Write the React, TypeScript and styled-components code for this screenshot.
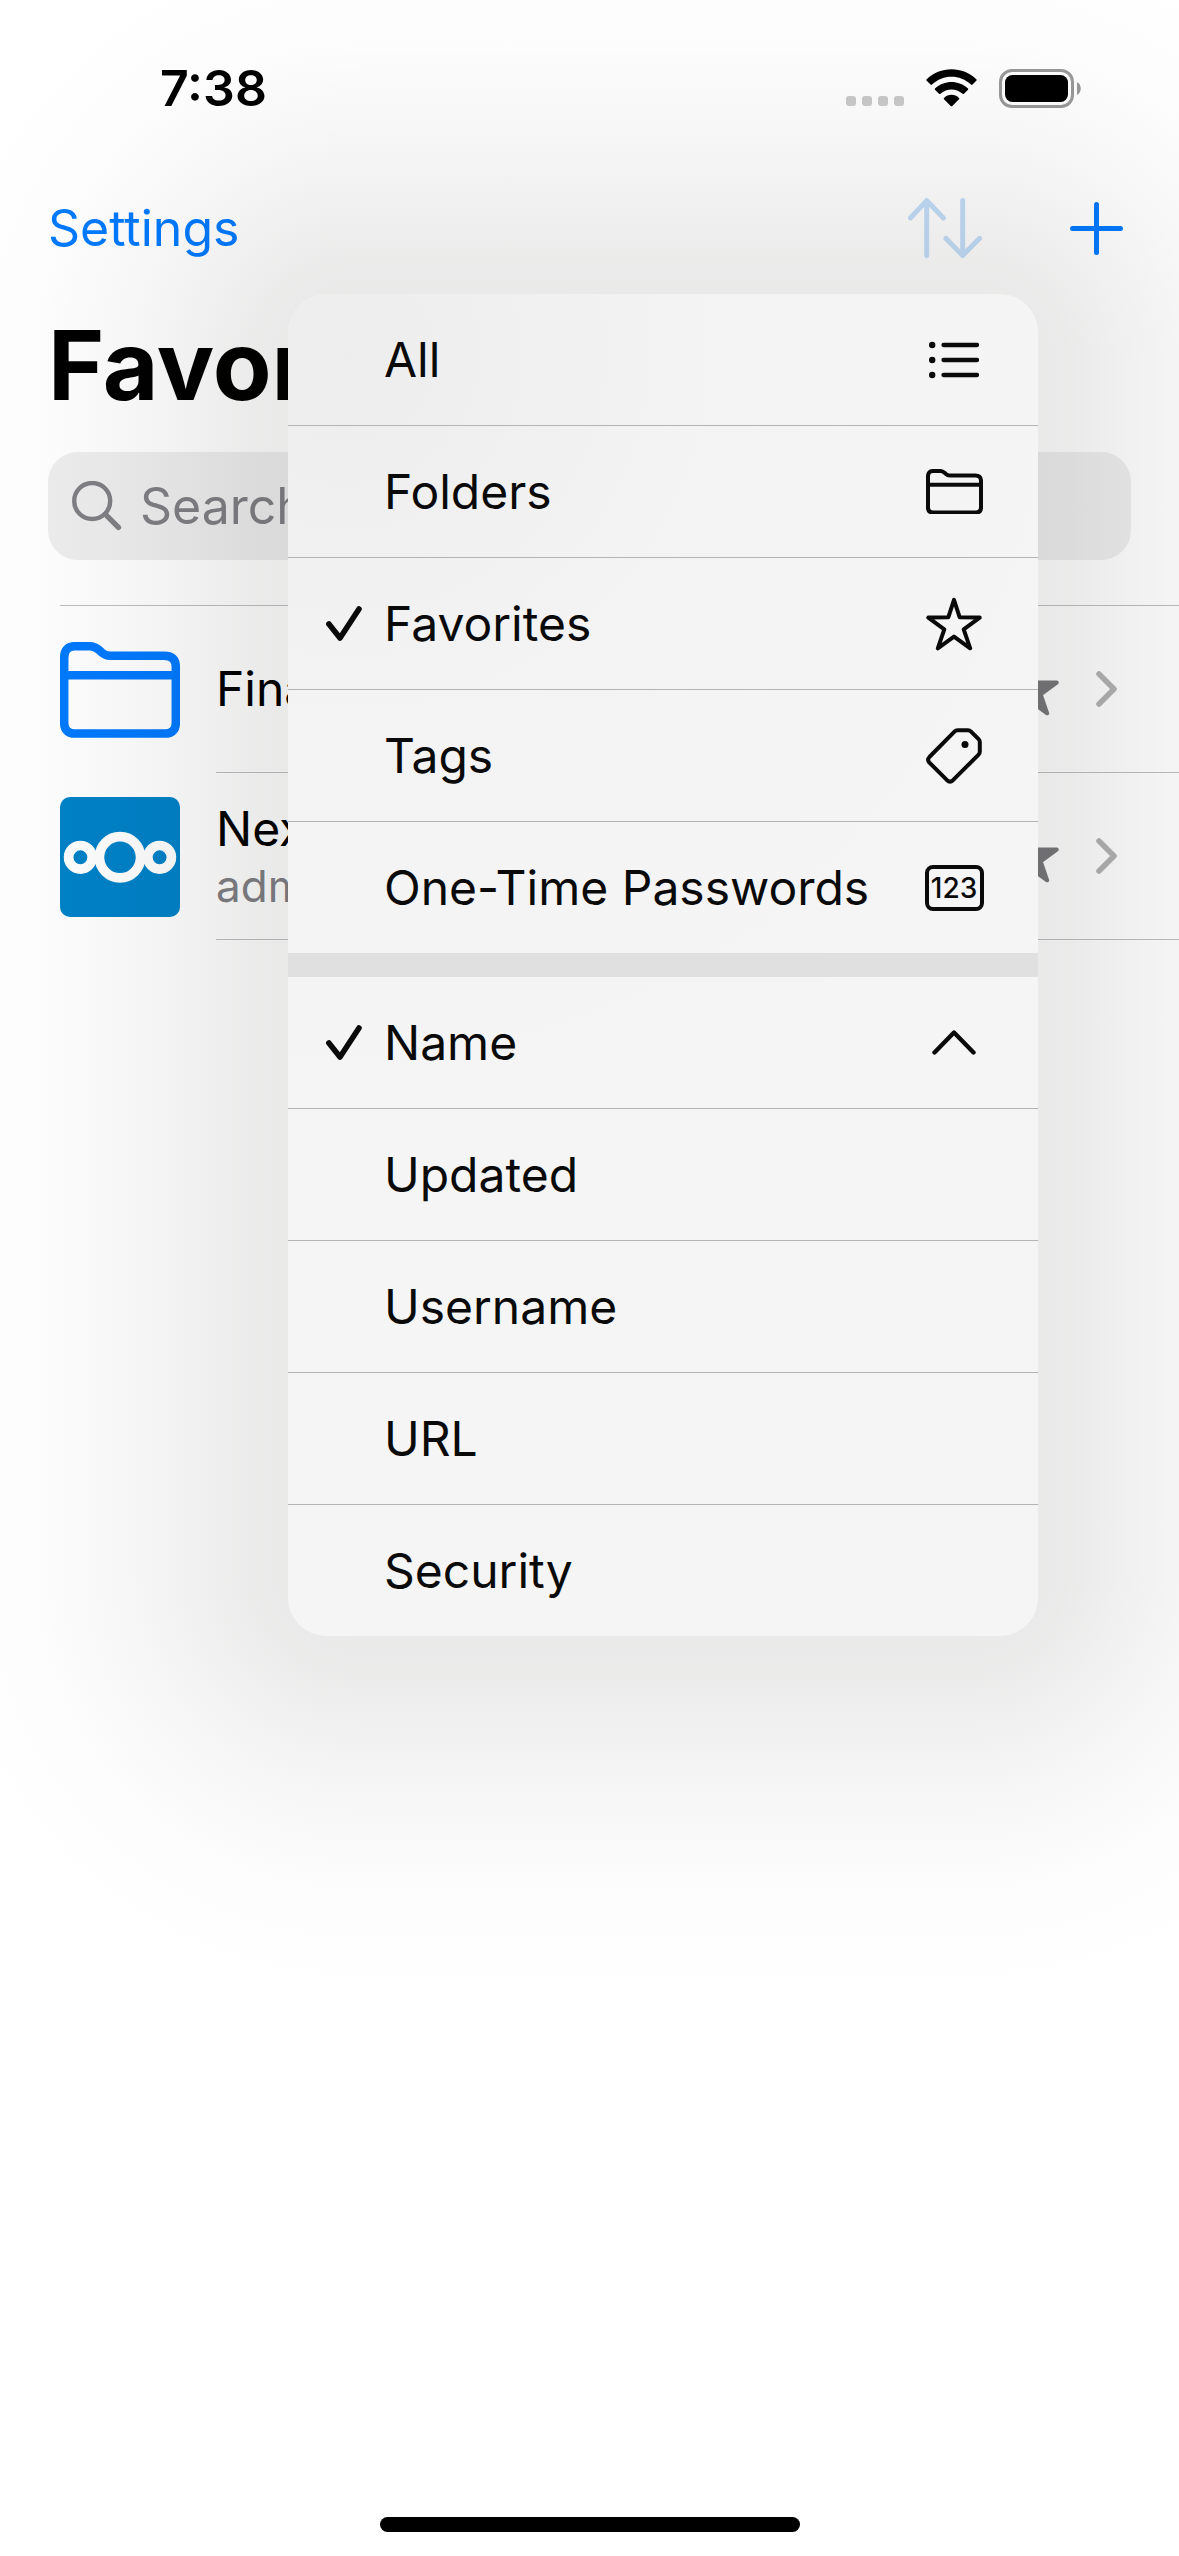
import React from "react";
import styled, { createGlobalStyle } from "styled-components";

const GlobalStyle = createGlobalStyle`
  *, *::before, *::after { box-sizing: border-box; }
  body {
    margin: 0;
    background: #fff;
    color: #000;
    font-family: Inter, "Noto Sans", sans-serif;
    font-size: 48px;
    line-height: 60px;
  }
  button {
    margin: 0;
    padding: 0;
    border: 0;
    background: none;
    color: inherit;
    font: inherit;
    text-align: left;
    cursor: pointer;
  }
  svg { display: block; flex: none; }
`;

const Screen = styled.div`
  position: relative;
  display: flex;
  flex-direction: column;
  min-height: 100vh;
  overflow: hidden;
`;

const StatusBar = styled.header`
  display: flex;
  align-items: center;
  justify-content: space-between;
  height: 162px;
  padding: 14px 98px 0 160px;
`;

const Clock = styled.time`
  font-size: 50px;
  font-weight: 600;
`;

const StatusIcons = styled.div`
  display: flex;
  align-items: center;
  gap: 22px;
`;

const SignalDots = styled.div`
  display: flex;
  gap: 6px;
  margin-top: 26px;
`;

const SignalDot = styled.span`
  width: 10px;
  height: 10px;
  border-radius: 3px;
  background: #cacaca;
`;

const NavBar = styled.nav`
  display: flex;
  align-items: center;
  justify-content: space-between;
  height: 132px;
  padding: 0 56px 0 48px;
  font-size: 50px;
`;

const NavButton = styled.button<{ $dimmed?: boolean }>`
  color: ${(p) => (p.$dimmed ? "#c4def9" : "#007aff")};
`;

const NavActions = styled.div`
  display: flex;
  align-items: center;
  gap: 88px;
`;

const Title = styled.h1`
  margin: 0 48px;
  font-size: 96px;
  font-weight: 700;
  line-height: 142px;
`;

const SearchField = styled.label`
  display: flex;
  align-items: center;
  gap: 18px;
  height: 108px;
  margin: 16px 48px 45px;
  padding: 0 24px;
  border-radius: 30px;
  background: #eeeeef;
  color: #808085;
  font-size: 50px;
`;

const SearchInput = styled.input`
  flex: 1;
  min-width: 0;
  padding: 0;
  border: 0;
  outline: 0;
  background: none;
  color: #000;
  font: inherit;
  &::placeholder { color: #808085; opacity: 1; }
`;

const EntryList = styled.ul`
  margin: 0 0 0 60px;
  padding: 0;
  border-top: 1px solid #bfbfc1;
  list-style: none;
`;

const Entry = styled.a`
  display: flex;
  gap: 36px;
  height: 167px;
  color: #000;
  text-decoration: none;
`;

const EntryIcon = styled.span`
  display: flex;
  align-items: center;
  color: #007aff;
`;

const EntryBody = styled.span`
  display: flex;
  flex: 1;
  align-items: center;
  gap: 37px;
  padding-right: 62px;
  border-bottom: 1px solid #bfbfc1;
`;

const EntryText = styled.span`
  display: flex;
  flex: 1;
  flex-direction: column;
`;

const EntryDetail = styled.span`
  color: #808085;
  font-size: 44px;
  line-height: 54px;
`;

const EntryStar = styled.span`
  color: #79797d;
`;

const EntryChevron = styled.span`
  color: #b3b3b4;
`;

/* Opacity of the popover's ambient shadow by distance from its edge. */
const falloff: [number, number][] = [
  [0, 0.086],
  [30, 0.081],
  [80, 0.063],
  [125, 0.047],
  [170, 0.032],
  [205, 0.022],
  [250, 0.012],
  [285, 0.008],
  [320, 0.004],
  [380, 0],
];
const shade = (inset: number) =>
  falloff.map(([d, a]) => `rgba(6, 6, 0, ${a}) ${d + inset}px`).join(", ");
const corner = (at: string) => `radial-gradient(circle at ${at}, ${shade(70)})`;
const side = (to: string) => `linear-gradient(to ${to}, ${shade(70)})`;

const Popover = styled.div`
  position: absolute;
  top: 294px;
  right: 141px;
  width: 750px;
  &::before {
    content: "";
    position: absolute;
    inset: -380px;
    pointer-events: none;
    background-repeat: no-repeat;
    background-image:
      ${corner("100% 100%")}, ${corner("0 100%")}, ${corner("100% 0")}, ${corner("0 0")},
      ${side("top")}, ${side("bottom")}, ${side("left")}, ${side("right")};
    background-size:
      450px 450px, 450px 450px, 450px 450px, 450px 450px,
      calc(100% - 900px) 450px, calc(100% - 900px) 450px,
      450px calc(100% - 900px), 450px calc(100% - 900px);
    background-position:
      left top, right top, left bottom, right bottom,
      center top, center bottom, left center, right center;
  }
`;

const Menu = styled.div`
  position: relative;
  overflow: hidden;
  border-radius: 38px;
  background: radial-gradient(circle at 60px 60px, #ededed, #f3f3f3 340px, #f5f5f5 800px);
`;

const MenuGroup = styled.div`
  & + & { border-top: 24px solid #e0e0e0; }
`;

const MenuItem = styled.button`
  display: grid;
  grid-template-columns: 36px 1fr 60px;
  column-gap: 22px;
  align-items: center;
  width: 100%;
  height: 132px;
  padding: 0 54px 0 38px;
  border-bottom: 1px solid #b4b4b4;
  color: #0a0a0a;
  white-space: nowrap;
  &:last-child {
    height: 131px;
    border-bottom: 0;
  }
`;

const ItemIcon = styled.span`
  display: flex;
  justify-content: center;
`;

const NumberBadge = styled.span`
  display: flex;
  align-items: center;
  justify-content: center;
  width: 59px;
  height: 46px;
  border: 4px solid currentColor;
  border-radius: 8px;
  font-size: 28px;
  font-weight: 500;
  line-height: 30px;
`;

const HomeIndicator = styled.div`
  width: 420px;
  height: 15px;
  margin: auto auto 24px;
  border-radius: 8px;
  background: #000;
`;

const line = {
  fill: "none",
  stroke: "currentColor",
  strokeLinecap: "round",
  strokeLinejoin: "round",
} as const;

const WifiIcon = () => (
  <svg width="51" height="38" viewBox="0 0 51 38" aria-hidden="true">
    <path d="M.5 10.4C14-3.2 37-3.2 50.5 10.4Q51 11 50.5 11.6L46.5 15.6Q45.8 16.2 45 15.5C34 5 17 5 6 15.5Q5.2 16.2 4.5 15.6L.5 11.6Q0 11 .5 10.4Z" />
    <path d="M9 19.6C18 10.8 33 10.8 42 19.6Q42.5 20.2 42 20.8L38 24.8Q37.3 25.4 36.6 24.8C30 19 21 19 14.4 24.8Q13.7 25.4 13 24.8L9 20.8Q8.5 20.2 9 19.6Z" />
    <path d="M18 29C22 24.8 29 24.8 33 29Q33.6 29.6 33 30.2L26.3 36.9Q25.5 37.6 24.7 36.9L18 30.2Q17.4 29.6 18 29Z" />
  </svg>
);

const BatteryIcon = () => (
  <svg width="82" height="39" viewBox="0 0 82 39" aria-hidden="true">
    <rect x="1.5" y="1.5" width="72" height="36" rx="11.5" fill="none" stroke="#999" strokeWidth="3" />
    <rect x="6" y="6" width="63" height="27" rx="7.5" />
    <path d="M78 13C83 15.5 83 23.5 78 26Z" fill="#999" />
  </svg>
);

const SortIcon = () => (
  <svg width="74" height="60" viewBox="0 0 74 60" strokeWidth="5" {...line} aria-hidden="true">
    <path d="M18.7 57.4V2.6M2.4 20 18.7 2.6 35.4 20" />
    <path d="M54.7 2.6V57.4M38 40.4 54.7 57.4 71.4 40.4" />
  </svg>
);

const PlusIcon = () => (
  <svg width="53" height="53" viewBox="0 0 53 53" strokeWidth="5" {...line} aria-hidden="true">
    <path d="M26.5 2.5V50.5M2.5 26.5H50.5" />
  </svg>
);

const SearchIcon = () => (
  <svg width="50" height="50" viewBox="0 0 50 50" strokeWidth="4.4" {...line} aria-hidden="true">
    <circle cx="20.2" cy="20" r="18" />
    <path d="M33.4 33.4 46.4 46.4" strokeWidth="5.4" />
  </svg>
);

const FolderIcon = ({ width }: { width: number }) => (
  <svg width={width} height={width * 0.8} viewBox="0 0 120 96" strokeWidth="8.5" {...line} aria-hidden="true">
    <path d="M4.2 81V15.5C4.2 8 8 4.2 14.5 4.2H30C34 4.2 36 5.5 39 8L41.5 10.2C44 12.6 46 13.8 50 13.8H104C112 13.8 115.8 17.5 115.8 25V81C115.8 88 112 91.6 105 91.6H15C8 91.6 4.2 88 4.2 81Z" />
    <path d="M4.2 33.3H115.8" />
  </svg>
);

const NextcloudIcon = () => (
  <svg width="120" height="120" viewBox="0 0 120 120" aria-hidden="true">
    <rect width="120" height="120" rx="10" fill="#0082c9" />
    <g fill="none" stroke="#fff" strokeWidth="9.7">
      <circle cx="60" cy="60.3" r="20.6" />
      <circle cx="20.4" cy="60.3" r="11.8" />
      <circle cx="99.6" cy="60.3" r="11.8" />
    </g>
  </svg>
);

const StarIcon = ({ filled }: { filled?: boolean }) => (
  <svg width="56" height="54" viewBox="0 0 56 54" strokeWidth="4" {...line} fill={filled ? "currentColor" : "none"} aria-hidden="true">
    <path d="M28 2.8 33.6 20.2 53.7 20.6 37.7 32.3 44.2 51.3 28 39.6 11.8 51.3 18.3 32.3 2.3 20.6 22.4 20.2Z" />
  </svg>
);

const ChevronRight = () => (
  <svg width="21" height="36" viewBox="0 0 21 36" strokeWidth="5.5" {...line} aria-hidden="true">
    <path d="M3 3 18 18 3 33" />
  </svg>
);

const CheckIcon = () => (
  <svg width="36" height="35" viewBox="0 0 36 35" strokeWidth="5.6" {...line} aria-hidden="true">
    <path d="M2.9 18 14 32 33 3" />
  </svg>
);

const ListIcon = () => (
  <svg width="50" height="38" viewBox="0 0 50 38" strokeWidth="4.3" {...line} aria-hidden="true">
    <path d="M14.5 4H48M14.5 19H48M14.5 34H48" />
    <g fill="currentColor" stroke="none">
      <circle cx="3.2" cy="4" r="3.2" />
      <circle cx="3.2" cy="19" r="3.2" />
      <circle cx="3.2" cy="34" r="3.2" />
    </g>
  </svg>
);

const TagIcon = () => (
  <svg width="56" height="56" viewBox="0 0 56 56" strokeWidth="4" {...line} aria-hidden="true">
    <path d="M31.5 2.2H42Q43.6 2.2 44.8 3.4L52.6 11.2Q53.8 12.4 53.8 14V23.8Q53.8 25.4 52.6 26.6L27 52.2Q24 54.9 21 52.2L3.4 34.6Q.8 31.8 3.4 29L28.7 3.4Q29.9 2.2 31.5 2.2Z" />
    <circle cx="39" cy="16.4" r="3.5" fill="currentColor" stroke="none" />
  </svg>
);

const ChevronUp = () => (
  <svg width="44" height="25" viewBox="0 0 44 25" strokeWidth="4.4" {...line} aria-hidden="true">
    <path d="M2.5 22.5 22 2.5 41.5 22.5" />
  </svg>
);

type Option = { label: string; checked?: boolean; icon?: React.ReactNode };

const filters: Option[] = [
  { label: "All", icon: <ListIcon /> },
  { label: "Folders", icon: <FolderIcon width={57} /> },
  { label: "Favorites", checked: true, icon: <StarIcon /> },
  { label: "Tags", icon: <TagIcon /> },
  { label: "One-Time Passwords", icon: <NumberBadge aria-hidden="true">123</NumberBadge> },
];

const orders: Option[] = [
  { label: "Name", checked: true, icon: <ChevronUp /> },
  { label: "Updated" },
  { label: "Username" },
  { label: "URL" },
  { label: "Security" },
];

const entries = [
  { name: "Finance", icon: <FolderIcon width={120} /> },
  { name: "Nextcloud", detail: "admin", icon: <NextcloudIcon /> },
];

const OptionGroup = ({ label, options }: { label: string; options: Option[] }) => (
  <MenuGroup role="group" aria-label={label}>
    {options.map((o) => (
      <MenuItem key={o.label} type="button" role="menuitemradio" aria-checked={!!o.checked}>
        <span>{o.checked && <CheckIcon />}</span>
        <span>{o.label}</span>
        <ItemIcon>{o.icon}</ItemIcon>
      </MenuItem>
    ))}
  </MenuGroup>
);

export default function App() {
  return (
    <Screen>
      <GlobalStyle />
      <StatusBar>
        <Clock>7:38</Clock>
        <StatusIcons>
          <SignalDots>
            <SignalDot />
            <SignalDot />
            <SignalDot />
            <SignalDot />
          </SignalDots>
          <WifiIcon />
          <BatteryIcon />
        </StatusIcons>
      </StatusBar>
      <NavBar>
        <NavButton type="button">Settings</NavButton>
        <NavActions>
          <NavButton type="button" $dimmed aria-label="Sort and filter">
            <SortIcon />
          </NavButton>
          <NavButton type="button" aria-label="Add">
            <PlusIcon />
          </NavButton>
        </NavActions>
      </NavBar>
      <Title>Favorites</Title>
      <SearchField>
        <SearchIcon />
        <SearchInput type="text" placeholder="Search" aria-label="Search" />
      </SearchField>
      <EntryList>
        {entries.map((e) => (
          <li key={e.name}>
            <Entry href="#">
              <EntryIcon>{e.icon}</EntryIcon>
              <EntryBody>
                <EntryText>
                  <span>{e.name}</span>
                  {e.detail && <EntryDetail>{e.detail}</EntryDetail>}
                </EntryText>
                <EntryStar>
                  <StarIcon filled />
                </EntryStar>
                <EntryChevron>
                  <ChevronRight />
                </EntryChevron>
              </EntryBody>
            </Entry>
          </li>
        ))}
      </EntryList>
      <HomeIndicator />
      <Popover>
        <Menu role="menu">
          <OptionGroup label="Show" options={filters} />
          <OptionGroup label="Sort by" options={orders} />
        </Menu>
      </Popover>
    </Screen>
  );
}
